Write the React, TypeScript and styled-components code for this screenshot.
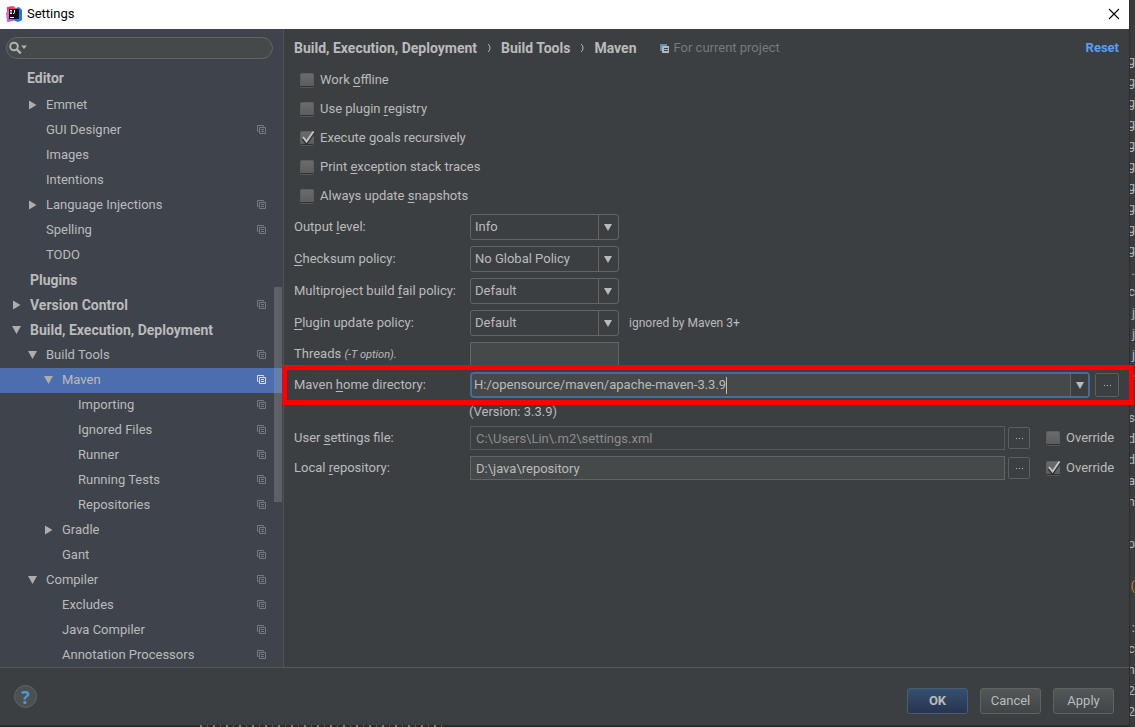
import React, { useState } from 'react';
import styled, { createGlobalStyle, css } from 'styled-components';

const Global = createGlobalStyle`
  *, *::before, *::after { box-sizing: border-box; }
  body { margin: 0; background: #313335; }
  body, button, input, select {
    font-family: Roboto, 'Open Sans', sans-serif;
    font-size: 13px;
    line-height: 18px;
    color: #bbbbbb;
  }
  button, input, select { margin: 0; border: 0; padding: 0; background: none; outline: none; }
  u { text-underline-offset: 2px; text-decoration-thickness: 1px; }
`;

const strong = css`
  font-size: 14px;
  font-weight: 700;
`;

const Screen = styled.div`
  display: grid;
  grid-template-columns: minmax(0, 1fr) 6px;
  grid-template-rows: minmax(0, 1fr) 2px;
  height: 100vh;
  overflow: hidden;
`;

const EditorEdge = styled.div`
  grid-row: 1 / 3;
  grid-column: 2;
  display: flex;
  flex-direction: column;
  align-items: flex-end;
  padding-top: 50px;
  overflow: hidden;
  background: #3a3c3e;
  border-left: 1px solid #2b2d2e;
`;

const EdgeLine = styled.span<{ $color?: string }>`
  flex: none;
  height: 21px;
  line-height: 21px;
  color: ${(p) => p.$color ?? '#a9b7c6'};
`;

const EditorBottom = styled.div`
  grid-row: 2;
  padding-left: 200px;
  background: #2b2b2b;
  &::before {
    content: '';
    display: block;
    width: 245px;
    height: 2px;
    background: repeating-linear-gradient(90deg, #8f7a48 0 2px, #2b2b2b 2px 7px, #6b5d3c 7px 8px, #2b2b2b 8px 13px);
  }
`;

const Dialog = styled.div`
  display: flex;
  flex-direction: column;
  min-height: 0;
  background: #3c3f41;
`;

const TitleBar = styled.header`
  flex: none;
  display: flex;
  align-items: center;
  gap: 5px;
  height: 29px;
  padding: 0 9px 2px 6px;
  background: #ffffff;
  color: #000000;
`;

const Title = styled.h1`
  flex: 1;
  margin: 0;
  font-size: 13px;
  font-weight: 400;
`;

const CloseButton = styled.button`
  display: flex;
`;

const Body = styled.div`
  flex: 1;
  display: flex;
  min-height: 0;
`;

const Sidebar = styled.nav`
  position: relative;
  flex: none;
  width: 284px;
  overflow: hidden;
  background: #3e434c;
  border-right: 1px solid #515456;
`;

const SearchBox = styled.label`
  display: flex;
  align-items: center;
  height: 22px;
  margin: 8px 10px 7px 6px;
  padding: 0 8px 0 2px;
  border: 1px solid #646464;
  border-radius: 11px;
  background: #45494a;
`;

const SearchInput = styled.input`
  flex: 1;
  min-width: 0;
`;

const GroupTitle = styled.div`
  height: 25px;
  margin-bottom: 2px;
  padding-left: 27px;
  line-height: 24px;
  ${strong}
`;

const TreeRow = styled.div<{ $level: number; $selected?: boolean; $bold?: boolean }>`
  display: flex;
  align-items: center;
  height: 25px;
  padding: 0 17px 2px ${(p) => 12 + p.$level * 16}px;
  ${(p) => p.$bold && strong}
  ${(p) => p.$selected && css`background: #4b6eaf;`}
`;

const Twisty = styled.span`
  display: flex;
  width: 18px;
`;

const RowLabel = styled.span`
  flex: 1;
  white-space: nowrap;
`;

const ScrollThumb = styled.div`
  position: absolute;
  top: 258px;
  right: 1px;
  width: 8px;
  height: 215px;
  background: rgba(166, 166, 166, 0.3);
`;

const Main = styled.main`
  flex: 1;
  min-width: 0;
  padding: 9px 10px 0 10px;
`;

const Crumbs = styled.div`
  display: flex;
  align-items: center;
  height: 20px;
  margin-bottom: 7px;
  white-space: nowrap;
  ${strong}
`;

const CrumbSeparator = styled.span`
  display: flex;
  width: 24px;
  justify-content: center;
`;

const Scope = styled.span`
  flex: 1;
  display: flex;
  align-items: center;
  gap: 4px;
  padding-left: 24px;
  font-size: 13px;
  font-weight: 400;
  color: #777a7c;
`;

const ResetLink = styled.a`
  font-size: 13px;
  color: #589df6;
  text-decoration: none;
`;

const CheckList = styled.div`
  margin-bottom: 1px;
`;

const CheckLabel = styled.label`
  display: flex;
  align-items: center;
  gap: 6px;
  height: 29px;
  padding-left: 6px;
  white-space: nowrap;
`;

const CheckStack = styled.span`
  display: grid;
  width: 14px;
  height: 18px;
  align-items: center;
  > * { grid-area: 1 / 1; }
  > svg { pointer-events: none; }
`;

const CheckInput = styled.input`
  appearance: none;
  width: 14px;
  height: 14px;
  border: 1px solid #5c5f60;
  border-bottom-color: #2f3132;
  border-radius: 2px;
  background: linear-gradient(#6b6b6b, #5d5d5d);
  box-shadow: 0 1px 0 #54585a;
`;

const FormRow = styled.div<{ $height: number }>`
  position: relative;
  display: flex;
  align-items: center;
  height: ${(p) => p.$height}px;
`;

const FieldLabel = styled.label`
  flex: none;
  width: 176px;
  white-space: nowrap;
`;

const SmallNote = styled.em`
  font-size: 11px;
`;

const SelectBox = styled.span`
  display: grid;
  width: 149px;
  height: 26px;
  border: 1px solid #646464;
  border-radius: 3px;
  > * { grid-area: 1 / 1; }
`;

const Select = styled.select`
  appearance: none;
  width: 100%;
  padding: 0 24px 0 4px;
`;

const ArrowCell = styled.span`
  justify-self: end;
  display: flex;
  align-items: center;
  justify-content: center;
  width: 20px;
  padding-right: 1px;
  border-left: 1px solid #646464;
  pointer-events: none;
`;

const Hint = styled.span`
  padding-left: 10px;
  font-size: 12px;
`;

const TextField = styled.input<{ $grow?: boolean }>`
  height: 24px;
  padding: 0 5px;
  border: 1px solid #646464;
  background: #45494a;
  ${(p) => (p.$grow ? css`flex: 1; min-width: 0;` : css`width: 149px;`)}
  &:disabled {
    background: #3c3f41;
    border-color: #585b5c;
    color: #8c8c8c;
  }
`;

const HomeCombo = styled.div`
  flex: 1;
  min-width: 0;
  display: flex;
  align-items: center;
  height: 26px;
  margin-right: 5px;
  border: 2px solid #466d94;
  border-radius: 4px;
  background: #45494a;
`;

const HomeInput = styled.input`
  field-sizing: content;
  margin-left: 2px;
  caret-color: transparent;
`;

const Caret = styled.span`
  width: 1px;
  height: 17px;
  background: #bbbbbb;
`;

const HomeArrow = styled.button`
  display: flex;
  align-items: center;
  justify-content: center;
  align-self: stretch;
  width: 18px;
  margin-left: auto;
  border-left: 1px solid #646464;
  background: #3c3f41;
`;

const BrowseButton = styled.button<{ $wide?: boolean }>`
  display: flex;
  align-items: center;
  justify-content: center;
  width: ${(p) => (p.$wide ? 24 : 22)}px;
  height: ${(p) => (p.$wide ? 24 : 22)}px;
  border: 1px solid #5c5f60;
  border-radius: 2px;
`;

const Highlight = styled.div`
  position: absolute;
  inset: -4px -15px -4px -12px;
  z-index: 1;
  border: 5px solid #ff0000;
  pointer-events: none;
`;

const VersionNote = styled.div`
  height: 22px;
  padding: 2px 0 0 175px;
`;

const OverrideLabel = styled(CheckLabel)`
  padding-left: 16px;
  width: 89px;
`;

const PathRow = styled(FormRow)`
  ${BrowseButton} { margin-left: 3px; }
`;

const Footer = styled.footer`
  flex: none;
  display: flex;
  align-items: center;
  gap: 12px;
  height: 58px;
  padding: 8px 15px 0 14px;
  border-top: 1px solid #555859;
`;

const HelpButton = styled.button`
  width: 23px;
  height: 23px;
  margin: 0 auto 8px 0;
  border: 1px solid #616466;
  border-radius: 50%;
  background: #4c5052;
  font-family: 'Open Sans', sans-serif;
  font-size: 18px;
  font-weight: 700;
  line-height: 20px;
  color: #4a9bc9;
`;

const DialogButton = styled.button<{ $primary?: boolean }>`
  width: 61px;
  height: 26px;
  border: 1px solid ${(p) => (p.$primary ? '#4c5d73' : '#5f6364')};
  border-radius: 3px;
  background: ${(p) => (p.$primary ? 'linear-gradient(#365070, #263450)' : 'linear-gradient(#525757, #414546)')};
  font-weight: ${(p) => (p.$primary ? 700 : 400)};
`;

const LogoIcon = () => (
  <svg width="16" height="16" viewBox="0 0 16 16" aria-hidden="true">
    <path d="M1 1l6-1 4 3-3 5-7-1z" fill="#fc3866" />
    <path d="M0 7l3-4 3 6-2 6-3 1z" fill="#e26ac0" />
    <path d="M1 16l2-6 7 2-3 3z" fill="#b65fd6" />
    <path d="M10 2l3-1 3 3v10l-4 2-5-2 6-5z" fill="#1879e8" />
    <rect x="3" y="3" width="10" height="10" fill="#101010" />
    <path d="M4 4.500h2M5 4.500v3M4 7.500h2M8.500 4v2.500q0 1-1.500 1M4 11.500h4" stroke="#ffffff" fill="none" />
  </svg>
);

const CloseIcon = () => (
  <svg width="12" height="12" viewBox="0 0 12 12" aria-hidden="true">
    <path d="M1 1l10 10M11 1L1 11" stroke="#000000" strokeWidth="1.100" />
  </svg>
);

const SearchIcon = () => (
  <svg width="19" height="14" viewBox="0 0 19 14" aria-hidden="true">
    <circle cx="5" cy="5.500" r="3.800" stroke="#afb1b3" strokeWidth="2" fill="none" />
    <path d="M7.800 8.300l4 4" stroke="#afb1b3" strokeWidth="2.400" />
    <path d="M12 4.500h6l-3 3.500z" fill="#afb1b3" />
  </svg>
);

const RightTriangle = () => (
  <svg width="9" height="10" viewBox="0 0 9 10" aria-hidden="true">
    <path d="M1 .5l7.500 4.500L1 9.500z" fill="#adadad" />
  </svg>
);

const DownTriangle = () => (
  <svg width="9" height="8" viewBox="0 0 9 8" aria-hidden="true">
    <path d="M0 0h9L4.500 8z" fill="#adadad" />
  </svg>
);

const ArrowIcon = () => (
  <svg width="8" height="7" viewBox="0 0 8 7" aria-hidden="true">
    <path d="M0 0h8L4 7z" fill="#bbbbbb" />
  </svg>
);

const CopyIcon = ({ color }: { color: string }) => (
  <svg width="9" height="9" viewBox="0 0 9 9" aria-hidden="true">
    <path d="M1.500 6.500h-1v-6h6v1M2.500 2.500h6v6h-6zM4 4.500h3M4 6.500h3" stroke={color} fill="none" />
  </svg>
);

const ProjectIcon = () => (
  <svg width="9" height="9" viewBox="0 0 9 9" aria-hidden="true">
    <path d="M0 0h7v2H2v5H0z" fill="#5a8fae" />
    <path d="M2 2h7v7H2z" fill="#b4b6b8" />
    <path d="M4 4.500h4M4 6.500h4" stroke="#3c3f41" />
  </svg>
);

const ChevronIcon = () => (
  <svg width="5" height="10" viewBox="0 0 5 10" aria-hidden="true">
    <path d="M1 1q2 1.500 2 4t-2 4" stroke="#bbbbbb" fill="none" />
  </svg>
);

const CheckIcon = () => (
  <svg width="15" height="18" viewBox="0 0 15 18" aria-hidden="true">
    <path d="M3 9.500l3.500 4.500L13.500 4" stroke="#2c2e2f" strokeWidth="3" fill="none" />
    <path d="M3 8l3.500 4.500L13.500 2.500" stroke="#c4c4c4" strokeWidth="2" fill="none" />
  </svg>
);

const DotsIcon = () => (
  <svg width="7" height="1" viewBox="0 0 7 1" aria-hidden="true">
    <path d="M0 .5h1M3 .5h1M6 .5h1" stroke="#bbbbbb" />
  </svg>
);

type Item = { text: string; level: number; open?: boolean; copy?: boolean; bold?: boolean; selected?: boolean };

const items: Item[] = [
  { text: 'Emmet', level: 1, open: false },
  { text: 'GUI Designer', level: 1, copy: true },
  { text: 'Images', level: 1 },
  { text: 'Intentions', level: 1 },
  { text: 'Language Injections', level: 1, open: false, copy: true },
  { text: 'Spelling', level: 1, copy: true },
  { text: 'TODO', level: 1 },
  { text: 'Plugins', level: 0, bold: true },
  { text: 'Version Control', level: 0, open: false, bold: true, copy: true },
  { text: 'Build, Execution, Deployment', level: 0, open: true, bold: true },
  { text: 'Build Tools', level: 1, open: true, copy: true },
  { text: 'Maven', level: 2, open: true, selected: true, copy: true },
  { text: 'Importing', level: 3, copy: true },
  { text: 'Ignored Files', level: 3, copy: true },
  { text: 'Runner', level: 3, copy: true },
  { text: 'Running Tests', level: 3, copy: true },
  { text: 'Repositories', level: 3, copy: true },
  { text: 'Gradle', level: 2, open: false, copy: true },
  { text: 'Gant', level: 2, copy: true },
  { text: 'Compiler', level: 1, open: true, copy: true },
  { text: 'Excludes', level: 2, copy: true },
  { text: 'Java Compiler', level: 2, copy: true },
  { text: 'Annotation Processors', level: 2, copy: true },
];

const edgeLines: [string, string?][] = [
  ...Array.from({ length: 10 }, (): [string] => ['g']),
  ['.'], ['c'], ['j'], ['j'], ['j'], ['e', '#cc7832'], [''], ['s'], ['d'], ['d'], ['a'], ['m'], [''], ['p'],
  [''], ['(', '#cc7832'], [''], [':'], ['c'], ['m'], ['2'], ['2'],
];

const Check = ({ checked, label }: { checked?: boolean; label: React.ReactNode }) => {
  const [on, setOn] = useState(!!checked);
  return (
    <>
      <CheckStack>
        <CheckInput type="checkbox" checked={on} onChange={() => setOn(!on)} />
        {on && <CheckIcon />}
      </CheckStack>
      <span>{label}</span>
    </>
  );
};

const Combo = ({ id, value }: { id: string; value: string }) => (
  <SelectBox>
    <Select id={id} defaultValue={value}>
      <option>{value}</option>
    </Select>
    <ArrowCell><ArrowIcon /></ArrowCell>
  </SelectBox>
);

export default function App() {
  const [home, setHome] = useState('H:/opensource/maven/apache-maven-3.3.9');
  return (
    <Screen>
      <Global />
      <Dialog>
        <TitleBar>
          <LogoIcon />
          <Title>Settings</Title>
          <CloseButton aria-label="Close"><CloseIcon /></CloseButton>
        </TitleBar>
        <Body>
          <Sidebar>
            <SearchBox>
              <SearchIcon />
              <SearchInput type="text" aria-label="Search settings" />
            </SearchBox>
            <GroupTitle>Editor</GroupTitle>
            {items.map((item) => (
              <TreeRow key={item.text} $level={item.level} $selected={item.selected} $bold={item.bold}>
                <Twisty>
                  {item.open === true && <DownTriangle />}
                  {item.open === false && <RightTriangle />}
                </Twisty>
                <RowLabel>{item.text}</RowLabel>
                {item.copy && <CopyIcon color={item.selected ? '#d5def0' : '#777b80'} />}
              </TreeRow>
            ))}
            <ScrollThumb />
          </Sidebar>
          <Main>
            <Crumbs>
              Build, Execution, Deployment
              <CrumbSeparator><ChevronIcon /></CrumbSeparator>
              Build Tools
              <CrumbSeparator><ChevronIcon /></CrumbSeparator>
              Maven
              <Scope><ProjectIcon />For current project</Scope>
              <ResetLink href="#reset">Reset</ResetLink>
            </Crumbs>
            <CheckList>
              <CheckLabel><Check label={<>Work <u>o</u>ffline</>} /></CheckLabel>
              <CheckLabel><Check label={<>Use plugin <u>r</u>egistry</>} /></CheckLabel>
              <CheckLabel><Check checked label={<>Execute <u>g</u>oals recursively</>} /></CheckLabel>
              <CheckLabel><Check label={<>Print <u>e</u>xception stack traces</>} /></CheckLabel>
              <CheckLabel><Check label={<>Always update <u>s</u>napshots</>} /></CheckLabel>
            </CheckList>
            <FormRow $height={32}>
              <FieldLabel htmlFor="output">Output <u>l</u>evel:</FieldLabel>
              <Combo id="output" value="Info" />
            </FormRow>
            <FormRow $height={32}>
              <FieldLabel htmlFor="checksum"><u>C</u>hecksum policy:</FieldLabel>
              <Combo id="checksum" value="No Global Policy" />
            </FormRow>
            <FormRow $height={32}>
              <FieldLabel htmlFor="fail">Multiproject build <u>f</u>ail policy:</FieldLabel>
              <Combo id="fail" value="Default" />
            </FormRow>
            <FormRow $height={32}>
              <FieldLabel htmlFor="update"><u>P</u>lugin update policy:</FieldLabel>
              <Combo id="update" value="Default" />
              <Hint>ignored by Maven 3+</Hint>
            </FormRow>
            <FormRow $height={30}>
              <FieldLabel htmlFor="threads">Threads <SmallNote>(-T option).</SmallNote></FieldLabel>
              <TextField id="threads" type="text" />
            </FormRow>
            <FormRow $height={32}>
              <FieldLabel htmlFor="home">Maven <u>h</u>ome directory:</FieldLabel>
              <HomeCombo>
                <HomeInput id="home" type="text" value={home} onChange={(e) => setHome(e.target.value)} />
                <Caret />
                <HomeArrow aria-label="Show known directories"><ArrowIcon /></HomeArrow>
              </HomeCombo>
              <BrowseButton $wide aria-label="Browse for home directory"><DotsIcon /></BrowseButton>
              <Highlight />
            </FormRow>
            <VersionNote>(Version: 3.3.9)</VersionNote>
            <PathRow $height={30}>
              <FieldLabel htmlFor="user">User <u>s</u>ettings file:</FieldLabel>
              <TextField id="user" type="text" $grow disabled defaultValue="C:\Users\Lin\.m2\settings.xml" />
              <BrowseButton aria-label="Browse for settings file"><DotsIcon /></BrowseButton>
              <OverrideLabel><Check label="Override" /></OverrideLabel>
            </PathRow>
            <PathRow $height={30}>
              <FieldLabel htmlFor="repo">Local <u>r</u>epository:</FieldLabel>
              <TextField id="repo" type="text" $grow defaultValue="D:\java\repository" />
              <BrowseButton aria-label="Browse for repository"><DotsIcon /></BrowseButton>
              <OverrideLabel><Check checked label="Override" /></OverrideLabel>
            </PathRow>
          </Main>
        </Body>
        <Footer>
          <HelpButton aria-label="Help">?</HelpButton>
          <DialogButton $primary>OK</DialogButton>
          <DialogButton>Cancel</DialogButton>
          <DialogButton>Apply</DialogButton>
        </Footer>
      </Dialog>
      <EditorEdge aria-hidden="true">
        {edgeLines.map(([text, color], i) => (
          <EdgeLine key={i} $color={color}>{text}</EdgeLine>
        ))}
      </EditorEdge>
      <EditorBottom />
    </Screen>
  );
}
